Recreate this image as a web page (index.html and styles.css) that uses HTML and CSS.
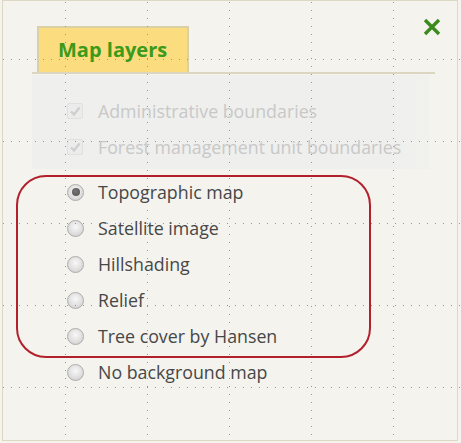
FILE: index.html
```html
<!DOCTYPE html>
<html lang="en">
<head>
<meta charset="utf-8">
<title>Map layers</title>
<link rel="stylesheet" href="styles.css">
</head>
<body>
<div class="frame">
  <div class="header">
    <div class="tabbar">
      <div class="tab">Map layers</div>
    </div>
    <button class="close" aria-label="Close">
      <svg width="18" height="18" viewBox="0 0 18 18"><path d="M2 2 L16 16 M16 2 L2 16" stroke="#3b8a1d" stroke-width="3.4" stroke-linecap="butt" fill="none"/></svg>
    </button>
  </div>
  <div class="overlays">
    <label class="row disabled"><span class="check"><svg width="12" height="12" viewBox="0 0 12 12"><path d="M2 6.5 L5 9.5 L10.5 2.5" stroke="#cfcfcf" stroke-width="2.4" fill="none"/></svg></span>Administrative boundaries</label>
    <label class="row disabled"><span class="check"><svg width="12" height="12" viewBox="0 0 12 12"><path d="M2 6.5 L5 9.5 L10.5 2.5" stroke="#cfcfcf" stroke-width="2.4" fill="none"/></svg></span>Forest management unit boundaries</label>
  </div>
  <div class="highlight">
    <label class="row"><span class="radio checked"></span>Topographic map</label>
    <label class="row"><span class="radio"></span>Satellite image</label>
    <label class="row"><span class="radio"></span>Hillshading</label>
    <label class="row"><span class="radio"></span>Relief</label>
    <label class="row"><span class="radio"></span>Tree cover by Hansen</label>
  </div>
  <label class="row outside"><span class="radio"></span>No background map</label>
</div>
<div class="grid"></div>
</body>
</html>
```
FILE: styles.css
```css
html, body {
  margin: 0;
  padding: 0;
}
body {
  width: 461px;
  height: 443px;
  background: #f4f3ee;
  font-family: "Open Sans", "Noto Sans", sans-serif;
  position: relative;
  overflow: hidden;
}
.frame {
  box-sizing: border-box;
  width: 456px;
  height: 441px;
  margin-left: 2px;
  border: 1px solid #dcd8c4;
  background: #f4f3ee;
}
.header {
  display: flex;
  align-items: flex-start;
}
.tabbar {
  margin: 25px 0 0 29px;
  width: 398px;
  height: 46px;
  border-bottom: 2px solid #dad6bf;
  padding-left: 5px;
  box-sizing: content-box;
  display: flex;
  align-items: flex-end;
}
.tab {
  box-sizing: border-box;
  width: 152px;
  height: 46px;
  background: #fbdc7f;
  border: 2px solid #d9d0a6;
  border-bottom: none;
  color: #3c9a1a;
  font-weight: 700;
  font-size: 20px;
  padding: 9px 0 0 19px;
  line-height: 26px;
}
.close {
  margin: 17px 0 0 -12px;
  padding: 0;
  border: none;
  background: none;
  width: 18px;
  height: 18px;
  display: block;
}
.close svg { display: block; }
.overlays {
  margin: 1px 0 0 29px;
  width: 398px;
  height: 94px;
  box-sizing: border-box;
  padding-top: 18px;
  background: linear-gradient(to right, #efefed 0%, #efefed 90%, #f1f1ee 100%);
}
.row {
  display: flex;
  align-items: center;
  height: 36px;
  font-size: 17.8px;
  color: #474747;
  white-space: nowrap;
}
.overlays .row {
  padding-left: 35px;
  height: 36px;
}
.row.disabled {
  color: #c8c8c8;
}
.check {
  width: 14px;
  height: 14px;
  border: 1px solid #e0e0e0;
  background: #ececec;
  border-radius: 2px;
  margin-right: 15px;
  display: flex;
  align-items: center;
  justify-content: center;
}
.highlight {
  margin: 6px 0 0 13px;
  width: 355px;
  height: 183px;
  box-sizing: border-box;
  border: 2px solid #b2202c;
  border-radius: 30px;
}
.highlight .row {
  padding-left: 49px;
}
.highlight .row:first-child {
  margin-top: -3px;
}
.radio {
  width: 17px;
  height: 17px;
  box-sizing: border-box;
  border-radius: 50%;
  border: 1px solid #acacac;
  background: radial-gradient(circle at 50% 40%, #f8f8f8 0%, #e0e0e0 55%, #cacaca 100%);
  margin-right: 14px;
  flex: none;
  display: flex;
  align-items: center;
  justify-content: center;
}
.radio.checked::after {
  content: "";
  width: 8px;
  height: 8px;
  border-radius: 50%;
  background: radial-gradient(circle at 45% 40%, #777 0%, #505050 100%);
}
.row.outside {
  padding-left: 64px;
  margin-top: -4px;
}
.grid {
  position: absolute;
  left: 0;
  top: 0;
  width: 461px;
  height: 440px;
  pointer-events: none;
  background-image:
    linear-gradient(#959595 0 1px, transparent 1px),
    linear-gradient(#959595 0 1px, transparent 1px),
    linear-gradient(#959595 0 1px, transparent 1px),
    linear-gradient(#959595 0 1px, transparent 1px),
    linear-gradient(#959595 0 1px, transparent 1px),
    linear-gradient(to right, #959595 0 1px, transparent 1px),
    linear-gradient(to right, #959595 0 1px, transparent 1px),
    linear-gradient(to right, #959595 0 1px, transparent 1px),
    linear-gradient(to right, #959595 0 1px, transparent 1px),
    linear-gradient(to right, #959595 0 1px, transparent 1px);
  background-size:
    1px 8px, 1px 8px, 1px 8px, 1px 8px, 1px 8px,
    8px 1px, 8px 1px, 8px 1px, 8px 1px, 8px 1px;
  background-position:
    65px 2px, 147px 2px, 229px 2px, 311px 2px, 393px 2px,
    3px 59px, 3px 141px, 3px 223px, 3px 305px, 3px 387px;
  background-repeat:
    repeat-y, repeat-y, repeat-y, repeat-y, repeat-y,
    repeat-x, repeat-x, repeat-x, repeat-x, repeat-x;
}
```
